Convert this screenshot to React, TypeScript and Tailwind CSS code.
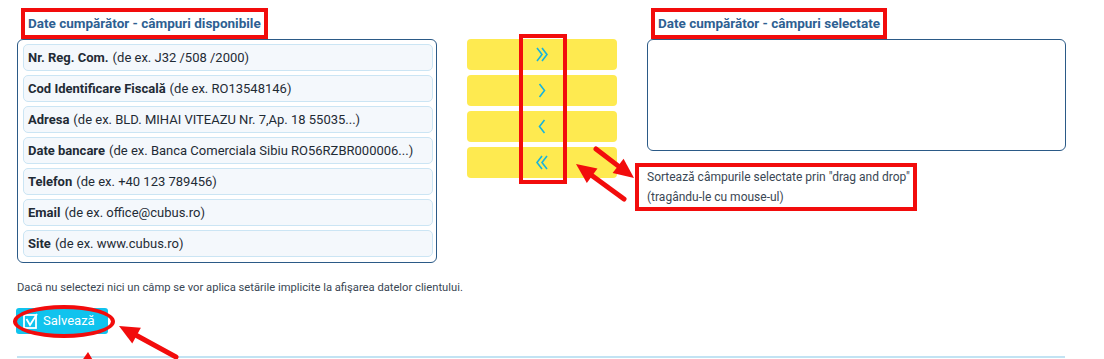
import React from "react";

interface Field {
  label: string;
  example: string;
}

const fields: Field[] = [
  { label: "Nr. Reg. Com.", example: "(de ex. J32 /508 /2000)" },
  { label: "Cod Identificare Fiscală", example: "(de ex. RO13548146)" },
  { label: "Adresa", example: "(de ex. BLD. MIHAI VITEAZU Nr. 7,Ap. 18 55035...)" },
  { label: "Date bancare", example: "(de ex. Banca Comerciala Sibiu RO56RZBR000006...)" },
  { label: "Telefon", example: "(de ex. +40 123 789456)" },
  { label: "Email", example: "(de ex. office@cubus.ro)" },
  { label: "Site", example: "(de ex. www.cubus.ro)" },
];

const Chevrons = ({ dir, double }: { dir: "left" | "right"; double?: boolean }) => {
  const pts = dir === "right" ? ["1,1 6,7.5 1,14", "6,1 11,7.5 6,14"] : ["11,1 6,7.5 11,14", "6,1 1,7.5 6,14"];
  return (
    <svg width="12" height="15" viewBox="0 0 12 15" fill="none" stroke="#17b4de" strokeWidth="1.6">
      {double ? (
        <>
          <polyline points={pts[0]} />
          <polyline points={pts[1]} />
        </>
      ) : (
        <polyline points={dir === "right" ? "3.5,1 8.5,7.5 3.5,14" : "8.5,1 3.5,7.5 8.5,14"} />
      )}
    </svg>
  );
};

const Arrow = ({ x1, y1, x2, y2 }: { x1: number; y1: number; x2: number; y2: number }) => {
  const a = Math.atan2(y2 - y1, x2 - x1);
  const len = 20;
  const w = 9;
  const bx = x2 - Math.cos(a) * len;
  const by = y2 - Math.sin(a) * len;
  const p1 = `${bx + Math.sin(a) * w},${by - Math.cos(a) * w}`;
  const p2 = `${bx - Math.sin(a) * w},${by + Math.cos(a) * w}`;
  return (
    <g>
      <line x1={x1} y1={y1} x2={bx} y2={by} stroke="#f20c0c" strokeWidth="5" strokeLinecap="round" />
      <polygon points={`${x2},${y2} ${p1} ${p2}`} fill="#f20c0c" />
    </g>
  );
};

export default function App() {
  return (
    <div className="relative w-[1104px] h-[359px] overflow-hidden bg-white font-['Roboto',sans-serif] text-[13px]">
      <div className="pl-[17px] pt-[8px]">
        <div className="flex items-start gap-[30px]">
          {/* available fields */}
          <div className="w-[420px]">
            <div className="ml-1 inline-block border-4 border-[#f20c0c] px-[3px] h-[31px] leading-[23px] text-[13.5px] font-bold text-[#2e5f92]">
              Date cumpărător - câmpuri disponibile
            </div>
            <div className="border border-[#2b5a87] rounded-md pt-[4px] pb-[5px] pl-[5px] pr-[3px] flex flex-col gap-[4px]">
              {fields.map((f) => (
                <div
                  key={f.label}
                  className="h-[27px] rounded-[5px] border border-[#cbe5f4] bg-[#f4f8fc] pl-[4px] flex items-center text-[#1f2b35] whitespace-nowrap"
                >
                  <span className="font-bold">{f.label}</span>
                  <span className="ml-[4px]">{f.example}</span>
                </div>
              ))}
            </div>
          </div>

          {/* move buttons */}
          <div className="relative w-[150px] pt-[31px] flex flex-col gap-[5px]">
            {[
              { dir: "right" as const, double: true },
              { dir: "right" as const, double: false },
              { dir: "left" as const, double: false },
              { dir: "left" as const, double: true },
            ].map((b, i) => (
              <button key={i} className="h-[31px] rounded-[4px] bg-[#feea50] flex items-center justify-center">
                <Chevrons dir={b.dir} double={b.double} />
              </button>
            ))}
            <div className="absolute left-[52px] top-[26px] w-[48px] h-[150px] border-4 border-[#f20c0c]" />
          </div>

          {/* selected fields */}
          <div className="w-[419px]">
            <div className="ml-1 inline-block border-4 border-[#f20c0c] px-[3px] h-[31px] leading-[23px] text-[13.5px] font-bold text-[#2e5f92]">
              Date cumpărător - câmpuri selectate
            </div>
            <div className="h-[112px] border border-[#2b5a87] rounded-md" />
            <div className="mt-[12px] -ml-[12px] w-[282px] border-4 border-[#f20c0c] pl-[8px] text-[12px] leading-[20px] text-[#3a4754]">
              <div>Sortează câmpurile selectate prin "drag and drop"</div>
              <div>(tragându-le cu mouse-ul)</div>
            </div>
          </div>
        </div>

        <p className="mt-[15px] text-[11.2px] leading-[20px] text-[#3a4754]">
          Dacă nu selectezi nici un câmp se vor aplica setările implicite la afişarea datelor clientului.
        </p>

        <div className="mt-[10px] relative w-fit">
          <button className="-ml-px h-[26px] w-[92px] rounded-[3px] bg-[#10c3ee] flex items-center gap-[5px] pl-[7px] text-white text-[13px]">
            <svg width="15" height="16" viewBox="0 0 15 16" fill="none" stroke="white" strokeWidth="1.8">
              <rect x="1" y="2" width="12" height="13" />
              <polyline points="3.5,6 7,12 14,1" />
            </svg>
            Salvează
          </button>
          <div className="absolute -left-[4px] -top-[3px] w-[102px] h-[33px] rounded-[50%] border-4 border-[#f20c0c]" />
        </div>

        <div className="mt-[22px] w-[1048px] h-[2px] bg-[#c2e3f3]" />
      </div>

      {/* annotation arrows */}
      <svg className="absolute inset-0 pointer-events-none" width="1104" height="359">
        <Arrow x1={596} y1={149} x2={634} y2={178} />
        <Arrow x1={624} y1={199} x2={576} y2={164} />
        <Arrow x1={176} y1={357} x2={119} y2={326} />
        <polygon points="88,352 81,362 94,362" fill="#f20c0c" />
      </svg>
    </div>
  );
}
